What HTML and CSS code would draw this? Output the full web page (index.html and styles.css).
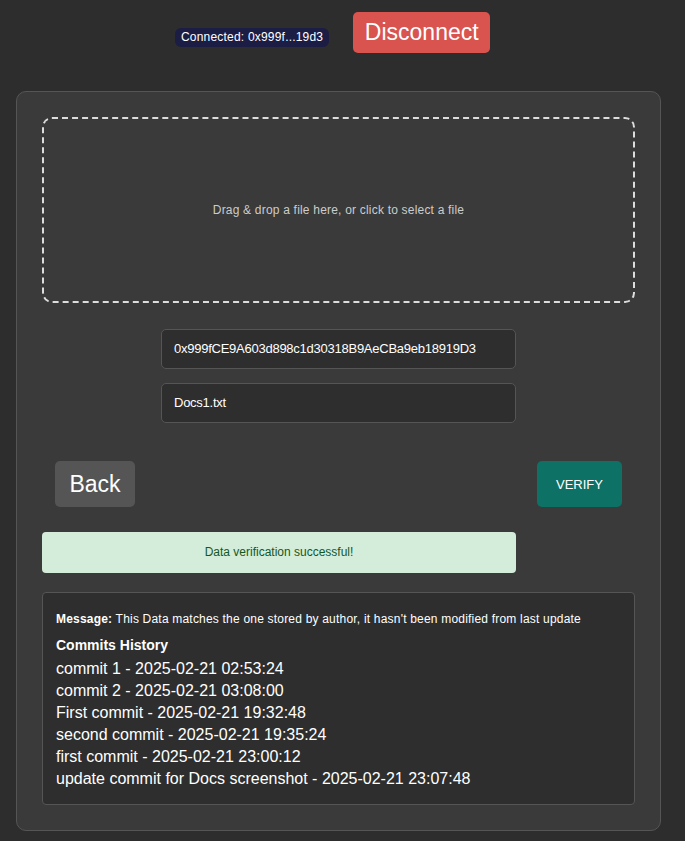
FILE: index.html
```html
<!DOCTYPE html>
<html>
<head>
<meta charset="utf-8">
<link rel="stylesheet" href="styles.css">
</head>
<body>
<header class="topbar">
  <span class="badge">Connected: 0x999f...19d3</span>
  <button class="btn-disconnect">Disconnect</button>
</header>
<main class="card">
  <div class="dropzone">Drag &amp; drop a file here, or click to select a file</div>
  <div class="fields">
    <div class="field">0x999fCE9A603d898c1d30318B9AeCBa9eb18919D3</div>
    <div class="field">Docs1.txt</div>
  </div>
  <div class="actions">
    <button class="btn-back">Back</button>
    <button class="btn-verify">VERIFY</button>
  </div>
  <div class="alert">Data verification successful!</div>
  <div class="result">
    <p class="message"><strong>Message:</strong> This Data matches the one stored by author, it hasn't been modified from last update</p>
    <h3 class="history-title">Commits History</h3>
    <ul class="commits">
      <li>commit 1 - 2025-02-21 02:53:24</li>
      <li>commit 2 - 2025-02-21 03:08:00</li>
      <li>First commit - 2025-02-21 19:32:48</li>
      <li>second commit - 2025-02-21 19:35:24</li>
      <li>first commit - 2025-02-21 23:00:12</li>
      <li>update commit for Docs screenshot - 2025-02-21 23:07:48</li>
    </ul>
  </div>
</main>
</body>
</html>
```
FILE: styles.css
```css
html, body {
  margin: 0;
  padding: 0;
  background: #2d2d2d;
  font-family: "Liberation Sans", Arial, sans-serif;
  color: #fff;
}
body {
  width: 685px;
  height: 841px;
  overflow: hidden;
}
.topbar {
  display: flex;
  align-items: center;
  padding: 12px 0 0 175px;
  height: 41px;
  gap: 24px;
}
.badge {
  background: #1b1d44;
  color: #fff;
  font-size: 12px;
  letter-spacing: 0.2px;
  line-height: 19px;
  padding: 0 6px;
  border-radius: 6px;
  margin-top: 10px;
}
.btn-disconnect {
  background: #d9534f;
  color: #fff;
  border: none;
  border-radius: 5px;
  font-family: "Liberation Sans", Arial, sans-serif;
  font-size: 23px;
  width: 137px;
  height: 41px;
  padding: 0;
}
.card {
  margin: 38px 0 0 16px;
  width: 593px;
  padding: 25px;
  background: #3a3a3a;
  border: 1px solid #555;
  border-radius: 10px;
}
.dropzone {
  height: 182px;
  border: 2px dashed #ddd;
  border-radius: 10px;
  display: flex;
  align-items: center;
  justify-content: center;
  font-size: 12px;
  letter-spacing: 0.2px;
  color: #ccc;
}
.fields {
  display: flex;
  flex-direction: column;
  align-items: center;
  gap: 14px;
  margin-top: 26px;
}
.field {
  box-sizing: border-box;
  width: 355px;
  height: 40px;
  background: #2e2e2e;
  border: 1px solid #555;
  border-radius: 5px;
  padding: 0 12px;
  font-size: 13px;
  letter-spacing: -0.25px;
  line-height: 38px;
  color: #fff;
}
.actions {
  display: flex;
  justify-content: space-between;
  padding: 0 13px;
  margin-top: 38px;
}
.btn-back {
  background: #555;
  color: #fff;
  border: none;
  border-radius: 5px;
  font-family: "Liberation Sans", Arial, sans-serif;
  font-size: 23px;
  width: 80px;
  height: 46px;
  padding: 0;
}
.btn-verify {
  background: #0e7166;
  color: #fff;
  border: none;
  border-radius: 5px;
  font-family: "Liberation Sans", Arial, sans-serif;
  font-size: 13px;
  width: 85px;
  height: 46px;
  padding: 0;
}
.alert {
  box-sizing: border-box;
  width: 474px;
  height: 41px;
  margin-top: 25px;
  background: #d4edda;
  color: #155724;
  border-radius: 4px;
  font-size: 12px;
  line-height: 41px;
  text-align: center;
}
.result {
  margin-top: 19px;
  background: #2e2e2e;
  border: 1px solid #555;
  border-radius: 4px;
  padding: 17px 13px 14px;
}
.message {
  margin: 0;
  font-size: 12px;
  letter-spacing: 0.2px;
  line-height: 18px;
}
.history-title {
  margin: 8px 0 0;
  font-size: 14px;
  line-height: 18px;
  font-weight: bold;
}
.commits {
  list-style: none;
  margin: 4px 0 0;
  padding: 0;
  font-size: 16px;
  line-height: 22px;
}
```
